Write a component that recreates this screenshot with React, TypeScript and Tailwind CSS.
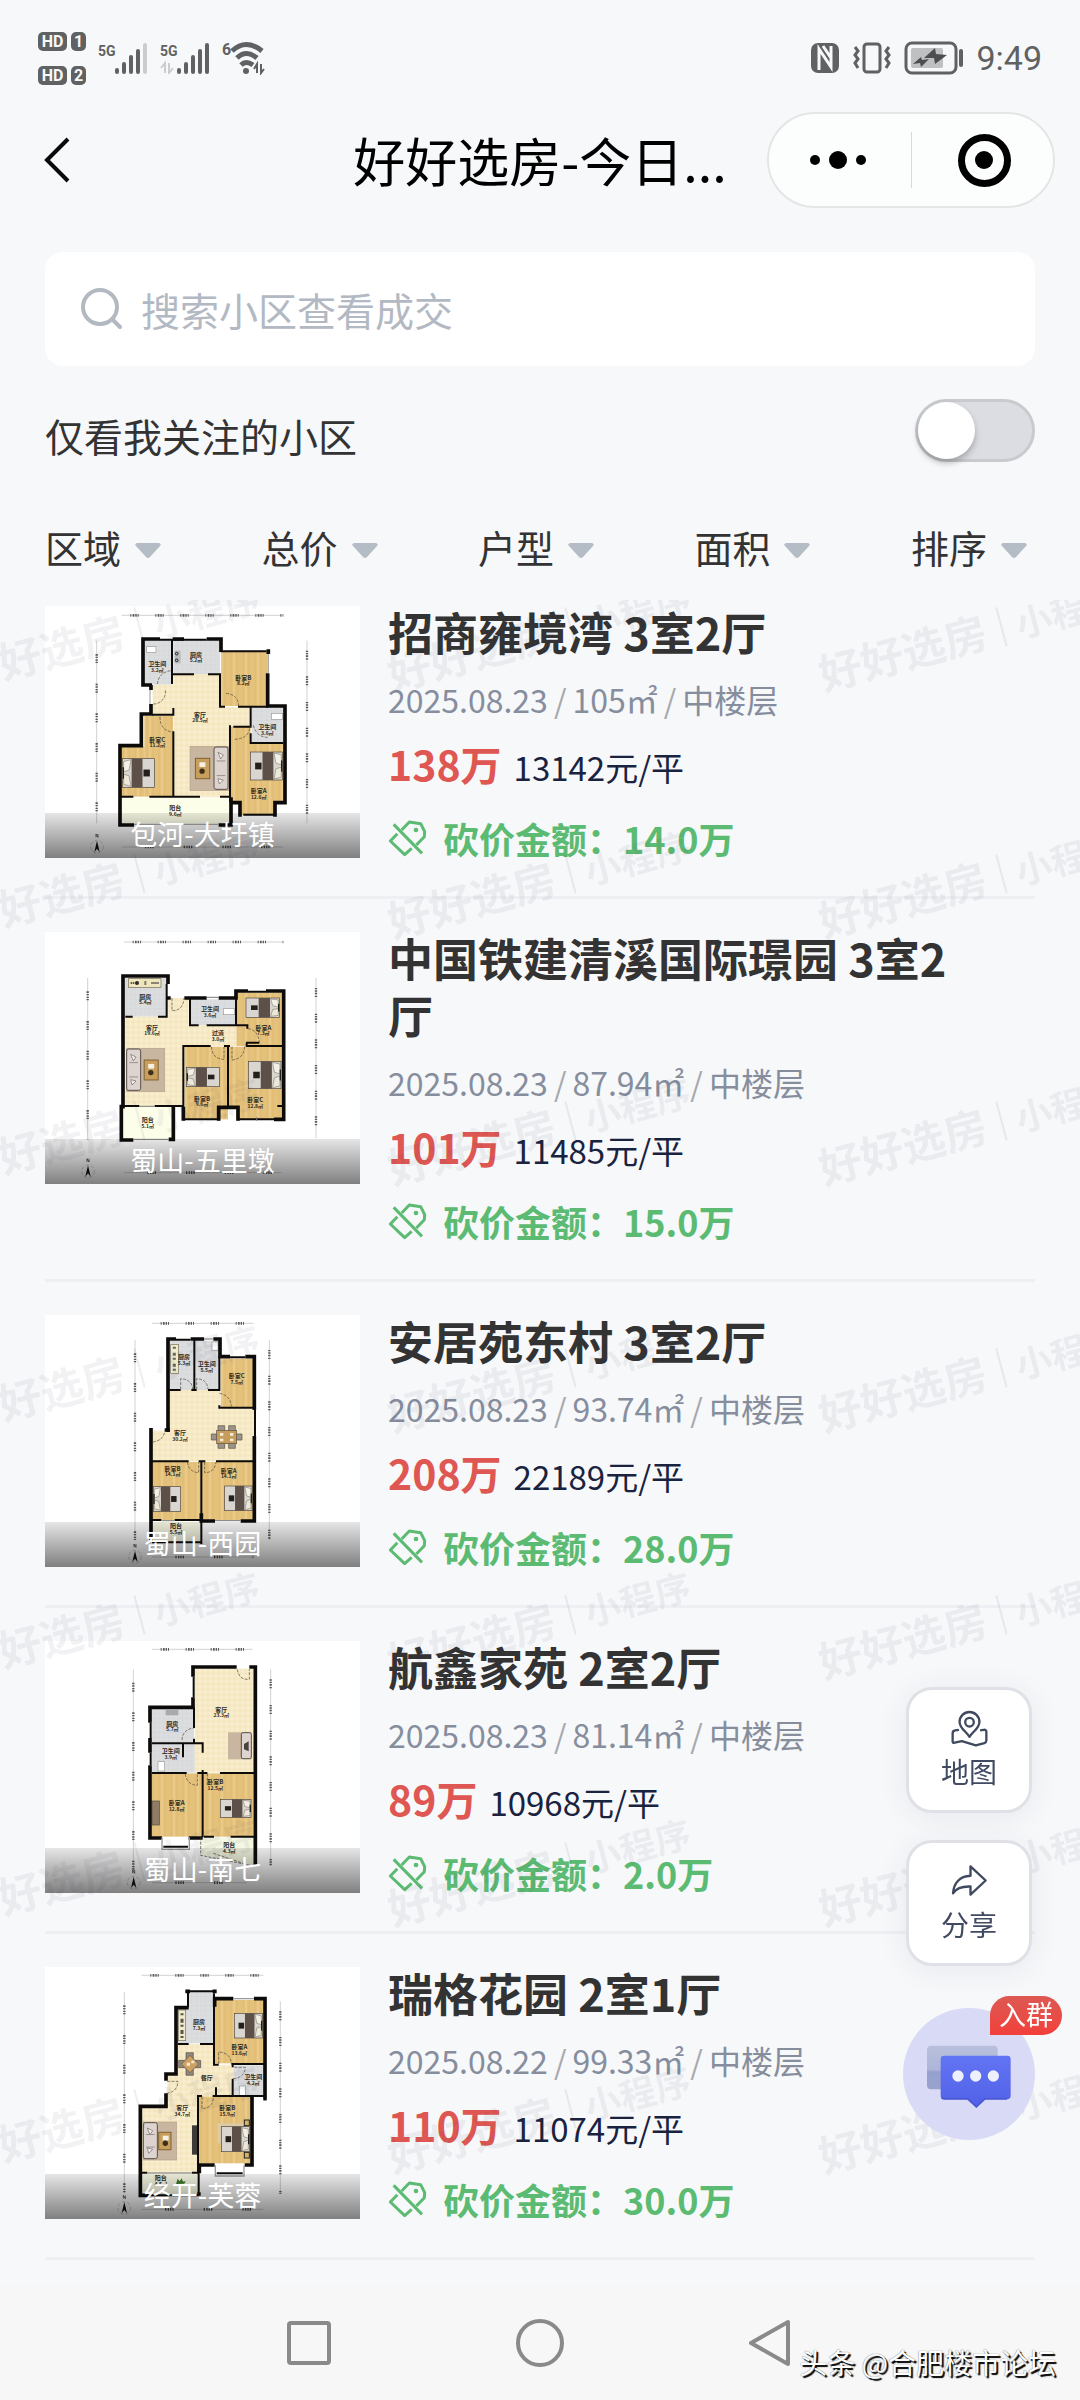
import { useState } from "react"
import type { ReactNode } from "react"

type Box = [x: number, y: number, w: number, h: number]

type Listing = {
  name: string
  district: string
  date: string
  area: string
  floor: string
  total: string
  unit: string
  discount: string
  plan: ReactNode
}

const filters = ["区域", "总价", "户型", "面积", "排序"]

/* ---------- floor plan drawing ---------- */

function PlanDefs() {
  return (
    <svg width="0" height="0" className="absolute" aria-hidden="true">
      <defs>
        <pattern id="wood" width="36" height="60" patternUnits="userSpaceOnUse">
          <rect width="36" height="60" fill="#e5c27c" />
          <path d="M9 0V60M27 0V60" stroke="#dab56d" strokeWidth="2" />
          <path d="M18 0V60" stroke="#edcf90" strokeWidth="4" />
        </pattern>
        <pattern id="cream" width="16" height="16" patternUnits="userSpaceOnUse">
          <rect width="16" height="16" fill="#f4e6bf" />
          <path d="M0 8L8 0L16 8L8 16Z" fill="#f8edcd" />
        </pattern>
        <pattern id="tile" width="14" height="14" patternUnits="userSpaceOnUse">
          <rect width="14" height="14" fill="#dcdddf" />
          <path d="M0 0H14M0 0V14" stroke="#d1d2d5" strokeWidth="2" />
        </pattern>
      </defs>
    </svg>
  )
}

function Floor({ kind, boxes }: { kind: "wood" | "cream" | "tile" | "balcony"; boxes: Box[] }) {
  const fill = kind === "balcony" ? "#fdfee9" : `url(#${kind})`
  return (
    <>
      {boxes.map(([x, y, w, h]) => (
        <rect key={`${x}-${y}`} x={x} y={y} width={w} height={h} fill={fill} />
      ))}
    </>
  )
}

function Walls({ thick, thin }: { thick: string; thin?: string }) {
  return (
    <g fill="none" stroke="#0c0b09">
      <path d={thick} strokeWidth="11" />
      {thin && <path d={thin} strokeWidth="6" />}
    </g>
  )
}

function Doors({ d }: { d: string }) {
  return <path d={d} fill="none" stroke="#4a4437" strokeWidth="2" strokeDasharray="9 4" />
}

// Drawn with the pillows on the right, mirrored when they lie on the left
function Bed({ box: [x, y, w, h], flip }: { box: Box; flip?: boolean }) {
  return (
    <g transform={flip ? `translate(${x + w} ${y}) scale(-1 1)` : `translate(${x} ${y})`}>
      <rect width={w} height={h} fill="#d9d6d2" stroke="#4c443c" strokeWidth="2" />
      <rect x={w * 0.38} width={w * 0.34} height={h} fill="#5c5049" />
      <rect x={w * 0.15} y={h * 0.38} width={w * 0.2} height={h * 0.24} fill="#241f1b" />
      <path d={`M${w * 0.74} 3L${w - 3} ${h * 0.1}V${h * 0.46}L${w * 0.8} ${h * 0.4}Z`} fill="#f3f0e6" stroke="#8d8576" strokeWidth="2" />
      <path d={`M${w * 0.74} ${h - 3}L${w - 3} ${h * 0.9}V${h * 0.54}L${w * 0.8} ${h * 0.6}Z`} fill="#ece8da" stroke="#8d8576" strokeWidth="2" />
      <path d={`M${w - 2} ${h * 0.3}V${h * 0.7}`} stroke="#1f2022" strokeWidth="4" />
    </g>
  )
}

function Sofa({ rug: [x, y, w, h], side }: { rug: Box; side: "left" | "right" }) {
  const sx = side === "left" ? x : x + w - 44
  const tx = side === "left" ? x + w * 0.46 : x + w * 0.14
  return (
    <g>
      <rect x={x} y={y} width={w} height={h} fill="#c9b6a0" stroke="#b7a38c" strokeWidth="2" />
      <rect x={sx} y={y + 2} width="42" height={h - 6} rx="6" fill="#ddd3cf" stroke="#58504a" strokeWidth="3" />
      <path d={`M${sx + 8} ${y + h * 0.33}H${sx + 34}M${sx + 8} ${y + h * 0.66}H${sx + 34}`} stroke="#77706a" strokeWidth="2" />
      <path d={`M${sx + 12} ${y + 18}l16 8l-8 12zM${sx + 12} ${y + h - 36}l16 4l-12 12z`} fill="#f4f0ee" stroke="#6d655f" strokeWidth="2" />
      <rect x={tx} y={y + h * 0.27} width={w * 0.37} height={h * 0.46} fill="#c79e5b" stroke="#7f6334" strokeWidth="3" />
      <rect x={tx + 12} y={y + h * 0.36} width="18" height="14" fill="#f5f1e6" />
      <circle cx={tx + 20} cy={y + h * 0.56} r="8" fill="#3d2f1a" />
    </g>
  )
}

function DiningTable({ x, y }: { x: number; y: number }) {
  return (
    <g stroke="#5b5044" strokeWidth="2">
      <path d={`M${x - 26} ${y - 34}h20v68h-20zM${x + 6} ${y - 34}h20v68h-20zM${x - 46} ${y - 9}h92v18h-92z`} fill="#9b948a" />
      <rect x={x - 30} y={y - 20} width="60" height="40" fill="#c79d5d" />
      <path d={`M${x - 20} ${y - 12}h10v8h-10zM${x + 10} ${y - 12}h10v8h-10zM${x - 20} ${y + 5}h10v8h-10zM${x + 10} ${y + 5}h10v8h-10z`} fill="#f6ecd4" stroke="none" />
    </g>
  )
}

function RoomLabel({ x, y, name, size }: { x: number; y: number; name: string; size: string }) {
  return (
    <text x={x} y={y} fontSize="18" textAnchor="middle" fill="#2d2a22" fontWeight="700">
      {name}
      <tspan x={x} dy="17" fontSize="15">
        {size}
      </tspan>
    </text>
  )
}

function Rulers({ top, left, right, bottom }: { top: string; left: string; right: string; bottom: string }) {
  return (
    <g fill="none">
      <path d={`${top}${left}${right}${bottom}`} stroke="#bbbbbb" strokeWidth="2" />
      <path d={top} stroke="#5a5a5a" strokeWidth="8" strokeDasharray="3 4 5 3 4 3 3 50" strokeDashoffset="-26" />
      <path d={left} stroke="#5a5a5a" strokeWidth="7" strokeDasharray="5 3 4 4 4 3 4 62" strokeDashoffset="-40" />
      <path d={right} stroke="#5a5a5a" strokeWidth="7" strokeDasharray="4 3 4 3 5 4 4 50" strokeDashoffset="-30" />
      <path d={bottom} stroke="#555" strokeWidth="8" strokeDasharray="4 4 4 3 4 3 4 90" strokeDashoffset="-70" />
    </g>
  )
}

function Compass({ x, y }: { x: number; y: number }) {
  return (
    <g>
      <circle cx={x} cy={y} r="19" fill="none" stroke="#777" strokeWidth="1" strokeDasharray="10 6" />
      <path d={`M${x} ${y - 18}L${x + 8} ${y + 16}L${x} ${y + 6}L${x - 8} ${y + 16}Z`} fill="#111" />
      <path d={`M${x - 3} ${y - 28}v-10l6 10v-10`} fill="none" stroke="#222" strokeWidth="2" />
    </g>
  )
}

function Plan({ viewBox, children }: { viewBox: string; children: ReactNode }) {
  return (
    <svg viewBox={viewBox} className="block size-full bg-white" aria-hidden="true">
      {children}
    </svg>
  )
}

const planBaohe = (
  <Plan viewBox="135 78 945 756">
    <Rulers top="M365 106H850" left="M290 182V730" right="M921 182V730" bottom="M365 801H850" />
    <Floor kind="tile" boxes={[[430, 180, 86, 134], [520, 180, 140, 102], [755, 378, 98, 112]]} />
    <Floor kind="cream" boxes={[[520, 282, 140, 370], [458, 314, 64, 90], [656, 382, 96, 58], [656, 438, 34, 214]]} />
    <Floor kind="wood" boxes={[[663, 216, 140, 162], [433, 408, 86, 242], [364, 500, 70, 150], [692, 440, 60, 225], [750, 490, 102, 178], [725, 660, 98, 44]]} />
    <Floor kind="balcony" boxes={[[364, 653, 326, 78]]} />
    <Sofa rug={[570, 499, 116, 133]} side="right" />
    <Bed box={[368, 536, 96, 86]} flip />
    <Bed box={[751, 516, 96, 84]} />
    <rect x="440" y="200" width="28" height="17" fill="#fff" stroke="#999" strokeWidth="2" />
    <rect x="814" y="400" width="34" height="18" fill="#fff" stroke="#999" strokeWidth="2" />
    <path d="M524 212h18v38h-18z" fill="#b9babd" />
    <circle cx="530" cy="221" r="4" fill="none" stroke="#222" strokeWidth="3" />
    <circle cx="530" cy="241" r="4" fill="none" stroke="#222" strokeWidth="3" />
    <Walls
      thick="M480 177H429V315H456M552 177H518M620 177H663V216M453 315V330M453 372V402H424V497H360V735H402M656 735H693V652M805 208V222M803 280V378H855V668H825V710M720 710V668H690"
      thin="M480 179H620M516 180V312M516 283H582M624 283H660V380H675M662 214H800M714 380H805M752 380V440H700M690 436V665M456 404H520V384M520 454V650M360 650H400M448 650H600M660 650H690M752 460V489H850M730 704H822"
    />
    <path d="M402 733H656M805 222V280M450 330V372" stroke="#999" strokeWidth="3" fill="none" />
    <Doors d="M460 372a36 36 0 0 0 36-42M480 410q0 42 38 46M678 340q38 4 38 40M704 478q44-2 46-40M472 312q4-34 40-40M760 436q10 36 44 36" />
    <RoomLabel x={472} y={258} name="卫生间" size="3.2㎡" />
    <RoomLabel x={588} y={230} name="厨房" size="5.2㎡" />
    <RoomLabel x={730} y={299} name="卧室B" size="8.2㎡" />
    <RoomLabel x={600} y={410} name="客厅" size="28.5㎡" />
    <RoomLabel x={472} y={485} name="卧室C" size="11.2㎡" />
    <RoomLabel x={802} y={447} name="卫生间" size="3.6㎡" />
    <RoomLabel x={776} y={640} name="卧室A" size="12.6㎡" />
    <RoomLabel x={526} y={690} name="阳台" size="9.6㎡" />
    <Compass x={291} y={800} />
  </Plan>
)

const planWulidun = (
  <Plan viewBox="135 66 945 756">
    <Rulers top="M372 96H850" left="M263 204V690" right="M948 204V685" bottom="M372 788H845" />
    <Floor kind="tile" boxes={[[374, 204, 126, 116], [568, 268, 140, 78]]} />
    <Floor kind="cream" boxes={[[374, 320, 180, 268], [500, 264, 66, 146], [550, 346, 192, 62]]} />
    <Floor kind="wood" boxes={[[710, 248, 138, 160], [742, 340, 104, 70], [554, 410, 130, 218], [686, 410, 160, 180], [715, 580, 130, 48]]} />
    <Floor kind="balcony" boxes={[[370, 590, 148, 98]]} />
    <rect x="385" y="206" width="98" height="26" fill="#efe6bb" stroke="#6f6a55" strokeWidth="2" />
    <path d="M392 219h14M436 214v12M454 219h24" stroke="#555" strokeWidth="6" strokeDasharray="4 2" />
    <circle cx="411" cy="219" r="6" fill="#2b2b2b" />
    <rect x="670" y="296" width="34" height="18" fill="#fff" stroke="#999" strokeWidth="2" />
    <Sofa rug={[380, 415, 114, 130]} side="left" />
    <Bed box={[560, 472, 98, 58]} flip />
    <Bed box={[738, 264, 100, 58]} />
    <Bed box={[745, 454, 98, 82]} />
    <Walls
      thick="M504 222V198H369V590H364V690H400M506 688H520V590M498 264H512M553 264H620M656 264H708V243H744M798 243H851V628H822M550 590V632M656 632V592H714V632"
      thin="M500 222V262M570 264V346H596M620 346H742V356M708 264V344M376 320H398M474 320H500V262M372 588H418M464 588H550V408H632M672 408H690M738 398H778M738 408H850M684 408V588M740 398V410M832 588H850M744 245H798M550 628H660M712 628H822"
    />
    <path d="M400 688H506M418 589H464M620 262H656M770 622V632" stroke="#777" strokeWidth="3" fill="none" />
    <Doors d="M516 264V302q34 0 36-38M634 410q2 36 38 38V410M696 450q36-4 38-40M696 410v40M744 356q30 4 34 40" />
    <RoomLabel x={436} y={266} name="厨房" size="5.4㎡" />
    <RoomLabel x={630} y={304} name="卫生间" size="3.6㎡" />
    <RoomLabel x={456} y={359} name="客厅" size="19.6㎡" />
    <RoomLabel x={654} y={376} name="过道" size="3.0㎡" />
    <RoomLabel x={790} y={359} name="卧室A" size="7.3㎡" />
    <RoomLabel x={606} y={572} name="卧室B" size="9.6㎡" />
    <RoomLabel x={766} y={576} name="卧室C" size="12.8㎡" />
    <RoomLabel x={443} y={636} name="阳台" size="5.1㎡" />
    <Compass x={264} y={784} />
  </Plan>
)

const planXiyuan = (
  <Plan viewBox="135 75 945 756">
    <Rulers top="M456 100H760" left="M405 150V750" right="M808 150V750" bottom="M456 801H760" />
    <Floor kind="tile" boxes={[[508, 152, 74, 148], [584, 152, 74, 148]]} />
    <Floor kind="cream" boxes={[[508, 300, 152, 214], [456, 422, 54, 92], [656, 356, 106, 158]]} />
    <Floor kind="wood" boxes={[[662, 206, 98, 146], [456, 516, 146, 174], [606, 516, 156, 174]]} />
    <Floor kind="balcony" boxes={[[456, 694, 146, 62]]} />
    <rect x="512" y="164" width="24" height="86" fill="#f0eccb" stroke="#716c58" strokeWidth="2" />
    <path d="M523 170v76" stroke="#666" strokeWidth="9" strokeDasharray="6 12 9 6" />
    <rect x="636" y="156" width="18" height="26" fill="#fff" stroke="#999" strokeWidth="2" />
    <DiningTable x={680} y={441} />
    <Bed box={[460, 590, 82, 74]} flip />
    <Bed box={[674, 588, 82, 74]} />
    <Walls
      thick="M504 426V147H528M572 147H612M640 147H660V200H690M736 200H763V360M763 438V693H722M645 693H604V670M453 414V755M510 420H494"
      thin="M528 149H572M583 150V300M508 300H542M574 300H590M624 300H658V200M658 346V353H762M456 514H566M596 514H616M648 514H762M604 514V762M456 690H484M524 690H606M456 757H606M690 202H736M765 360V440"
    />
    <path d="M645 692H722M484 692H524M612 147H640" stroke="#777" strokeWidth="3" fill="none" />
    <Doors d="M542 298V266q34 2 36 32M590 298V266q32 2 34 32M658 310q34 6 36 40M562 516q4 30 34 32V516M614 516v32q30 0 34-32M458 456q32-4 36-32" />
    <RoomLabel x={552} y={208} name="厨房" size="5.3㎡" />
    <RoomLabel x={620} y={228} name="卫生间" size="5.5㎡" />
    <RoomLabel x={710} y={264} name="卧室C" size="7.5㎡" />
    <RoomLabel x={540} y={436} name="客厅" size="30.2㎡" />
    <RoomLabel x={518} y={542} name="卧室B" size="14.1㎡" />
    <RoomLabel x={686} y={548} name="卧室A" size="14.1㎡" />
    <RoomLabel x={528} y={714} name="阳台" size="5.5㎡" />
    <Compass x={405} y={800} />
  </Plan>
)

const planNanqi = (
  <Plan viewBox="135 63 945 756">
    <Rulers top="M456 88H758" left="M400 148V750" right="M812 148V736" bottom="M456 788H740" />
    <Floor kind="tile" boxes={[[456, 266, 126, 102], [456, 372, 152, 86]]} />
    <Floor kind="cream" boxes={[[584, 146, 178, 312]]} />
    <Floor kind="wood" boxes={[[456, 460, 150, 190], [610, 460, 150, 190]]} />
    <path d="M602 652H762V735L602 706Z" fill="#f4f8e2" />
    <rect x="497" y="270" width="38" height="16" fill="#a9aaac" />
    <rect x="474" y="425" width="20" height="28" fill="#fff" stroke="#999" strokeWidth="2" />
    <rect x="684" y="337" width="70" height="81" fill="#c9b6a0" />
    <rect x="724" y="338" width="30" height="78" rx="5" fill="#ddd3cf" stroke="#58504a" strokeWidth="3" />
    <path d="M732 372l14-8v30l-14-6z" fill="#49423e" />
    <rect x="456" y="543" width="22" height="72" fill="#8f7b66" stroke="#574a3c" strokeWidth="2" />
    <Bed box={[661, 538, 92, 54]} />
    <Walls
      thick="M710 141H579V170M748 141H766V738M579 232V262H450V308M450 354V398M450 436V654H486M566 654H608"
      thin="M581 170V232M582 262V324M582 356V370M456 370H608V398M549 370V412M452 308V354M452 398V436M456 459H560M592 459H622M660 459H762M608 450V652M612 650H642M692 650H762M490 680H564"
    />
    <path d="M486 652V688H568V652" stroke="#999" strokeWidth="4" fill="none" />
    <Doors d="M712 148q4 32 36 30V148M546 360q2-32 36-36M556 462q4 32 36 34V462M622 460v38M602 652V706L762 738M640 700l90 30" />
    <RoomLabel x={664} y={275} name="客厅" size="23.3㎡" />
    <RoomLabel x={517} y={317} name="厨房" size="5.7㎡" />
    <RoomLabel x={512} y={400} name="卫生间" size="3.9㎡" />
    <RoomLabel x={530} y={555} name="卧室A" size="12.8㎡" />
    <RoomLabel x={646} y={492} name="卧室B" size="12.5㎡" />
    <RoomLabel x={688} y={682} name="阳台" size="4.3㎡" />
    <Compass x={401} y={788} />
  </Plan>
)

const planFurong = (
  <Plan viewBox="135 81 945 756">
    <Rulers top="M425 106H790" left="M373 156V760" right="M841 184V762" bottom="M425 808H790" />
    <Floor kind="tile" boxes={[[564, 156, 76, 154], [532, 206, 36, 104], [700, 376, 90, 94]]} />
    <Floor kind="cream" boxes={[[532, 312, 110, 190], [502, 406, 40, 98], [640, 374, 60, 96], [426, 502, 168, 198]]} />
    <Floor kind="wood" boxes={[[644, 180, 146, 190], [596, 470, 156, 200]]} />
    <Floor kind="balcony" boxes={[[426, 702, 168, 62]]} />
    <rect x="535" y="210" width="22" height="92" fill="#f0eccb" stroke="#716c58" strokeWidth="2" />
    <path d="M546 220v78" stroke="#555" strokeWidth="9" strokeDasharray="6 10 12 6" />
    <rect x="718" y="438" width="18" height="28" fill="#fff" stroke="#999" strokeWidth="2" />
    <g stroke="#5b5044" strokeWidth="2">
      <path d="M558 338h22v68h-22zM536 361h66v22h-66z" fill="#8e877e" />
      <path d="M570 346l26 26l-26 26l-26-26z" fill="#cda164" />
    </g>
    <path d="M560 368h10v9h-10zM574 362h9v8h-9z" fill="#f6ecd4" />
    <Sofa rug={[430, 546, 100, 114]} side="left" />
    <rect x="576" y="556" width="15" height="88" fill="#3d3a38" />
    <Bed box={[703, 220, 84, 74]} />
    <rect x="652" y="550" width="80" height="60" fill="#ddc9a4" />
    <Bed box={[664, 560, 84, 75]} />
    <rect x="733" y="540" width="15" height="17" fill="#d5b06a" stroke="#222" strokeWidth="3" />
    <rect x="733" y="637" width="15" height="17" fill="#d5b06a" stroke="#222" strokeWidth="3" />
    <path d="M528 732l5-16l6 8l6-9l4 10l8-2l-4 8z" fill="#3f7d2a" />
    <Walls
      thick="M556 154H570M638 154H650M528 312V203H566M644 200V176H700M762 176H795V478M528 312V402H498V422M498 460V499H421V766H446M598 670V700M596 675H644M734 675H756V470M790 476H800M592 762H602"
      thin="M564 156V202M564 154H644M642 160V312M534 312H566M600 312H642V374H656M694 372H795M698 374V382M698 416V468M648 442V468M594 700V468H606M638 468H795M426 698H442M576 698H598M596 700V766M446 766H596M650 700H728"
    />
    <path d="M646 676V708H732V676M442 699H576M700 176H762" stroke="#999" strokeWidth="4" fill="none" />
    <Doors d="M656 372V336q36 2 38 36M700 416q34-4 36-34H700M606 470v36q34-2 34-36M500 460q32-4 34-36H500" />
    <RoomLabel x={597} y={253} name="厨房" size="7.3㎡" />
    <RoomLabel x={718} y={328} name="卧室A" size="13.6㎡" />
    <RoomLabel x={620} y={420} name="餐厅" size="" />
    <RoomLabel x={760} y={418} name="卫生间" size="4.2㎡" />
    <RoomLabel x={547} y={510} name="客厅" size="34.7㎡" />
    <RoomLabel x={682} y={510} name="卧室B" size="15.9㎡" />
    <RoomLabel x={482} y={720} name="阳台" size="4.5㎡" />
    <Compass x={373} y={804} />
  </Plan>
)

const listings: Listing[] = [
  { name: "招商雍境湾 3室2厅", district: "包河-大圩镇", date: "2025.08.23", area: "105㎡", floor: "中楼层", total: "138万", unit: "13142元/平", discount: "14.0万", plan: planBaohe },
  { name: "中国铁建清溪国际璟园 3室2厅", district: "蜀山-五里墩", date: "2025.08.23", area: "87.94㎡", floor: "中楼层", total: "101万", unit: "11485元/平", discount: "15.0万", plan: planWulidun },
  { name: "安居苑东村 3室2厅", district: "蜀山-西园", date: "2025.08.23", area: "93.74㎡", floor: "中楼层", total: "208万", unit: "22189元/平", discount: "28.0万", plan: planXiyuan },
  { name: "航鑫家苑 2室2厅", district: "蜀山-南七", date: "2025.08.23", area: "81.14㎡", floor: "中楼层", total: "89万", unit: "10968元/平", discount: "2.0万", plan: planNanqi },
  { name: "瑞格花园 2室1厅", district: "经开-芙蓉", date: "2025.08.22", area: "99.33㎡", floor: "中楼层", total: "110万", unit: "11074元/平", discount: "30.0万", plan: planFurong },
]

/* ---------- status bar ---------- */

function HdBadge({ slot }: { slot: number }) {
  return (
    <div className="flex gap-1 font-[Roboto,sans-serif] text-base leading-[19px] font-bold text-[#f7f8fa]">
      <span className="w-[29px] rounded-[5px] bg-[#606162] text-center">HD</span>
      <span className="w-[15px] rounded-[5px] bg-[#606162] text-center">{slot}</span>
    </div>
  )
}

function Signal({ weak, arrows }: { weak?: boolean; arrows?: boolean }) {
  return (
    <svg width="50" height="32" viewBox="0 0 50 32" aria-hidden="true">
      <text x="0" y="14" fontSize="14" fontWeight="700" fill="#606162" fontFamily="Roboto, sans-serif">
        5G
      </text>
      <path d="M19 28V30M26 22V30M33 15V30M40 9V30" stroke="#606162" strokeWidth="4" strokeLinecap="round" />
      <path d="M47 3V30" stroke={weak ? "#cbccce" : "#606162"} strokeWidth="4" strokeLinecap="round" />
      {arrows && <path d="M5 31V21L1 26M9 21V31L13 26" fill="none" stroke="#cbccce" strokeWidth="2" />}
    </svg>
  )
}

function StatusBar() {
  return (
    <div className="flex h-28 items-center justify-between px-[38px] pt-1 text-[#606162]">
      <div className="flex items-center gap-3">
        <div className="flex flex-col gap-[15px]">
          <HdBadge slot={1} />
          <HdBadge slot={2} />
        </div>
        <Signal weak />
        <Signal arrows />
        <svg width="44" height="34" viewBox="4 0 44 34" aria-hidden="true">
          <text x="4" y="14" fontSize="16" fill="#606162" fontWeight="700" fontFamily="Roboto, sans-serif">
            6
          </text>
          <g fill="none" stroke="#606162" strokeWidth="5">
            <path d="M14 10Q28 -3 44 10" />
            <path d="M19 17Q28 8 39 17" />
            <path d="M23 24Q28 19 35 24" />
          </g>
          <circle cx="28" cy="30" r="3" fill="#606162" />
          <path d="M39 32V23L36 28M43 23V32L46 28" fill="none" stroke="#606162" strokeWidth="2" />
        </svg>
      </div>
      <div className="flex items-center gap-3">
        <svg width="30" height="32" viewBox="0 0 30 32" aria-hidden="true">
          <rect x="1" y="1" width="28" height="30" rx="7" fill="#606162" />
          <path d="M9 28V7L21 25V4M13 4L21 16" fill="none" stroke="#f7f8fa" strokeWidth="3" />
        </svg>
        <svg width="40" height="32" viewBox="0 0 40 32" fill="none" stroke="#606162" aria-hidden="true">
          <rect x="12" y="2" width="16" height="28" rx="3" strokeWidth="3" />
          <path d="M3 5L6 9L3 13L6 17L3 21L6 26M37 5L34 9L37 13L34 17L37 21L34 26" strokeWidth="3" />
        </svg>
        <svg width="60" height="34" viewBox="0 0 60 34" aria-hidden="true">
          <rect x="2" y="2" width="50" height="30" rx="6" fill="none" stroke="#606162" strokeWidth="3" />
          <rect x="7" y="7" width="32" height="20" rx="2" fill="#bfc0c2" />
          <path d="M9 23L17 16L18 19L25 18L17 26L16 22ZM20 17L31 7L32 13L43 14L31 23L30 17Z" fill="#4d4e50" />
          <path d="M57 10V24" stroke="#606162" strokeWidth="4" strokeLinecap="round" />
        </svg>
        <span className="font-[Roboto,sans-serif] text-[34px]">9:49</span>
      </div>
    </div>
  )
}

function NavBar() {
  return (
    <header className="grid h-24 grid-cols-[1fr_auto_1fr] items-center pr-[25px]">
      <button type="button" aria-label="返回" className="ml-10 justify-self-start">
        <svg width="32" height="48" viewBox="0 0 32 48" fill="none" stroke="#0a0a0a" strokeWidth="4" aria-hidden="true">
          <path d="M28 3L7 24L28 45" />
        </svg>
      </button>
      <h1 className="pl-[25px] text-[52px] leading-none whitespace-nowrap text-black">好好选房-今日...</h1>
      <div className="flex h-24 w-[288px] items-center justify-self-end rounded-full border-2 border-[#e4e5e7] bg-[#fcfdfd]">
        <button type="button" aria-label="更多" className="flex flex-1 items-center justify-center gap-[9px] pr-1">
          <span className="size-[10px] rounded-full bg-black" />
          <span className="size-[18px] rounded-full bg-black" />
          <span className="size-[10px] rounded-full bg-black" />
        </button>
        <span className="h-14 w-px bg-[#d8d9db]" />
        <button type="button" aria-label="关闭" className="flex flex-1 justify-center pl-1">
          <span className="flex size-[53px] items-center justify-center rounded-full border-[7px] border-black">
            <span className="size-[18px] rounded-full bg-black" />
          </span>
        </button>
      </div>
    </header>
  )
}

/* ---------- listing ---------- */

function BargainIcon() {
  return (
    <svg width="39" height="39" viewBox="0 0 117 117" fill="none" stroke="#5cbb72" strokeWidth="9" aria-hidden="true">
      <path d="M17 16L102 103" />
      <path d="M41 33L64 9L98 14L110 38L109 53L85 78" strokeLinejoin="round" />
      <path d="M28 44L7 66L50 107L71 88" strokeLinejoin="round" />
      <circle cx="84" cy="33" r="7" fill="#5cbb72" stroke="none" />
    </svg>
  )
}

function ListingCard({ item }: { item: Listing }) {
  return (
    <li className="border-b-[3px] border-[#eeeff2] pt-[33px] pb-[38px] first:pt-[6px]">
      <a href="#" className="flex gap-7">
        <div className="relative h-[252px] w-[315px] shrink-0">
          {item.plan}
          <p className="absolute inset-x-0 bottom-0 h-[45px] bg-linear-to-b from-black/10 to-black/50 text-center text-[27px] leading-[42px] text-white">
            {item.district}
          </p>
        </div>
        <div className="-mt-[3px] min-w-0 flex-1 pr-[60px]">
          <h2 className="text-[45px] leading-[57px] font-bold text-[#333333]">{item.name}</h2>
          <p className="mt-[19px] flex gap-[6px] text-[32px] leading-10 text-[#868e9e]">
            <span>{item.date}</span>
            <span className="text-[#a7a9ad]">/</span>
            <span>{item.area}</span>
            <span className="text-[#a7a9ad]">/</span>
            <span>{item.floor}</span>
          </p>
          <p className="mt-5 flex h-12 items-baseline gap-3 leading-12">
            <strong className="text-[41px] font-bold text-[#df5753]">{item.total}</strong>
            <span className="text-[33px] text-[#19233f]">{item.unit}</span>
          </p>
          <p className="mt-8 flex items-center gap-4 text-4xl leading-[39px] font-bold text-[#5cbb72]">
            <BargainIcon />
            砍价金额：{item.discount}
          </p>
        </div>
      </a>
    </li>
  )
}

function Watermark() {
  return (
    <svg className="pointer-events-none absolute inset-0 size-full" aria-hidden="true">
      <defs>
        <pattern id="watermark" x="-54" y="-153" width="431" height="247" patternUnits="userSpaceOnUse">
          <g transform="translate(16 244) rotate(-15)" fill="#1e2846" fillOpacity="0.06" fontWeight="700">
            <text fontSize="43">好好选房</text>
            <path d="M188 -36V4" stroke="#1e2846" strokeOpacity="0.08" strokeWidth="2" />
            <text x="203" fontSize="36">
              小程序
            </text>
          </g>
        </pattern>
      </defs>
      <rect width="100%" height="100%" fill="url(#watermark)" />
    </svg>
  )
}

/* ---------- floating actions ---------- */

function FloatButton({ label, children }: { label: string; children: ReactNode }) {
  return (
    <button
      type="button"
      className="flex size-[126px] flex-col items-center justify-center gap-1 rounded-[26px] border-[3px] border-[#dfe1e6] bg-white text-[28px] leading-10 text-[#404a60] shadow-[0_4px_30px_rgba(40,50,80,0.08)]"
    >
      {children}
      {label}
    </button>
  )
}

function FloatingActions() {
  return (
    <div className="fixed right-[45px] bottom-[260px] flex flex-col items-center">
      <FloatButton label="地图">
        <svg width="39" height="37" viewBox="0 0 116 112" fill="none" stroke="#3f4a60" strokeWidth="7" strokeLinejoin="round" aria-hidden="true">
          <path d="M58 81C47 64 28 55 28 36a30 30 0 0 1 60 0C88 55 69 64 58 81Z" />
          <circle cx="58" cy="37" r="13" />
          <path d="M26 60L14 62Q7 63 7 70V96Q7 101 13 99L35 94L77 107L103 100Q109 98 109 92V66Q109 59 101 60L90 62" />
        </svg>
      </FloatButton>
      <div className="h-[27px]" />
      <FloatButton label="分享">
        <svg width="37" height="37" viewBox="0 0 110 110" fill="none" stroke="#3f4a60" strokeWidth="7" strokeLinejoin="round" aria-hidden="true">
          <path d="M58 10L103 52L58 94V70C35 69 18 72 6 90C8 61 25 39 58 38Z" />
        </svg>
      </FloatButton>
      <button type="button" aria-label="入群" className="relative mt-[42px] size-[132px]">
        <svg viewBox="0 0 396 396" className="size-full" aria-hidden="true">
          <defs>
            <linearGradient id="backCard" x1="0" y1="0" x2="0" y2="1">
              <stop offset="0" stopColor="#b9c0dc" />
              <stop offset="0.55" stopColor="#adb6da" />
              <stop offset="0.6" stopColor="#95a0cf" />
              <stop offset="1" stopColor="#99a3cc" />
            </linearGradient>
            <linearGradient id="frontCard" x1="0" y1="0" x2="0" y2="1">
              <stop offset="0" stopColor="#6275f3" />
              <stop offset="1" stopColor="#5161e8" />
            </linearGradient>
          </defs>
          <circle cx="198" cy="198" r="198" fill="#d9dbf6" />
          <rect x="72" y="113" width="212" height="131" rx="12" fill="url(#backCard)" />
          <path d="M123 143H313Q323 143 323 153V263Q323 273 313 273H246L220 297L194 273H123Q113 273 113 263V153Q113 143 123 143Z" fill="url(#frontCard)" />
          <path d="M116 269Q118 273 124 273H194L220 297L246 273H313" fill="none" stroke="#4454cf" strokeWidth="4" />
          <g fill="#eef0fb">
            <circle cx="165" cy="204" r="17" />
            <circle cx="218" cy="204" r="17" />
            <circle cx="271" cy="204" r="17" />
          </g>
        </svg>
        <span className="absolute -top-3 left-[87px] h-[39px] w-[72px] rounded-full rounded-bl-[3px] bg-linear-to-b from-[#dd5852] to-[#f23f3b] text-center text-[27px] leading-9 text-white">
          入群
        </span>
      </button>
    </div>
  )
}

function SystemNav() {
  return (
    <footer className="relative flex h-[115px] items-center justify-center gap-[183px] bg-[#f7f7f7]">
      <button type="button" aria-label="最近任务">
        <svg width="48" height="48" viewBox="0 0 48 48" fill="none" stroke="#8a8a8a" strokeWidth="4" aria-hidden="true">
          <rect x="4" y="4" width="40" height="40" rx="2" />
        </svg>
      </button>
      <button type="button" aria-label="主屏幕">
        <svg width="48" height="48" viewBox="0 0 48 48" fill="none" stroke="#8a8a8a" strokeWidth="4" aria-hidden="true">
          <circle cx="24" cy="24" r="22" />
        </svg>
      </button>
      <button type="button" aria-label="返回上一页">
        <svg width="48" height="48" viewBox="0 0 48 48" fill="none" stroke="#8a8a8a" strokeWidth="4" strokeLinejoin="round" aria-hidden="true">
          <path d="M41 3V45L4 24Z" />
        </svg>
      </button>
      <p className="absolute right-6 bottom-5 text-[28px] leading-9 text-white [text-shadow:2px_2px_1px_#000,0_0_1px_#444]">
        头条 @合肥楼市论坛
      </p>
    </footer>
  )
}

export default function App() {
  const [onlyFollowed, setOnlyFollowed] = useState(false)

  return (
    <div className="flex min-h-screen flex-col bg-[#f7f8fa] font-['Noto_Sans_CJK_SC',sans-serif] text-[#333333]">
      <PlanDefs />
      <StatusBar />
      <NavBar />

      <div className="px-[45px] pt-11">
        <label className="flex h-[114px] items-center gap-[18px] rounded-[18px] bg-white px-9">
          <svg width="42" height="42" viewBox="0 0 42 42" fill="none" stroke="#b3b9c1" strokeWidth="4" strokeLinecap="round" aria-hidden="true">
            <circle cx="19" cy="19" r="17" />
            <path d="M32 32L39 39" />
          </svg>
          <input
            type="search"
            aria-label="搜索小区"
            placeholder="搜索小区查看成交"
            className="min-w-0 flex-1 bg-transparent text-[39px] leading-[50px] outline-none placeholder:text-[#b3b9c3]"
          />
        </label>

        <div className="mt-[33px] flex items-end justify-between">
          <label htmlFor="followed" className="text-[39px] leading-[53px]">
            仅看我关注的小区
          </label>
          <input
            id="followed"
            type="checkbox"
            role="switch"
            checked={onlyFollowed}
            onChange={(e) => setOnlyFollowed(e.target.checked)}
            className="h-[63px] w-[120px] appearance-none rounded-full border-[3px] border-[#c8cacd] bg-[#dcdde2] before:block before:size-[57px] before:rounded-full before:bg-white before:shadow-[0_4px_6px_rgba(0,0,0,0.25)] checked:bg-[#5cbb72] checked:before:ml-auto"
          />
        </div>

        <div className="mt-[60px] mb-7 flex justify-between pr-2">
          {filters.map((name) => (
            <button key={name} type="button" className="flex items-center gap-[14px] text-[38px] leading-[50px]">
              {name}
              <svg width="26" height="16" viewBox="0 0 26 16" className="mt-2" aria-hidden="true">
                <path d="M2 0H24Q27 1 25 3L15 14Q13 16 11 14L1 3Q-1 1 2 0Z" fill="#b4bdc5" />
              </svg>
            </button>
          ))}
        </div>
      </div>

      <main className="relative flex-1 overflow-hidden px-[45px] pb-[25px]">
        <ul>
          {listings.map((item) => (
            <ListingCard key={item.name} item={item} />
          ))}
        </ul>
        <Watermark />
      </main>

      <FloatingActions />
      <SystemNav />
    </div>
  )
}
